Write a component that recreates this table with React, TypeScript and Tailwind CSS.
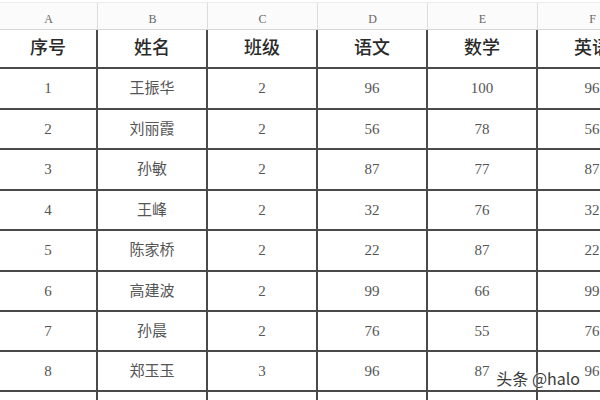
import React from 'react';

const letters = ['A', 'B', 'C', 'D', 'E', 'F'];
const headers = ['序号', '姓名', '班级', '语文', '数学', '英语'];

const rows = [
  ['1', '王振华', '2', '96', '100', '96'],
  ['2', '刘丽霞', '2', '56', '78', '56'],
  ['3', '孙敏', '2', '87', '77', '87'],
  ['4', '王峰', '2', '32', '76', '32'],
  ['5', '陈家桥', '2', '22', '87', '22'],
  ['6', '高建波', '2', '99', '66', '99'],
  ['7', '孙晨', '2', '76', '55', '76'],
  ['8', '郑玉玉', '3', '96', '87', '96'],
  ['', '', '', '', '', ''],
];

const heights = ['h-[41px]', 'h-[40px]', 'h-[41px]', 'h-[40px]', 'h-[41px]', 'h-[40px]', 'h-[40px]', 'h-[40px]', 'h-[40px]'];

const cellWidth = (i: number) => (i === 0 ? 'w-[98px]' : 'w-[110px]');

const cjk = "font-['Liberation_Serif','Noto_Sans_CJK_SC',serif]";

export default function App() {
  return (
    <div className="relative w-[600px] h-[400px] overflow-hidden bg-white antialiased">
      {/* column letters */}
      <div className="flex h-[28px] border-t border-[#ececec] mt-[2px] border-b border-b-[#d6d6d6] bg-[#fbfbfb]">
        {letters.map((l, i) => (
          <div
            key={l}
            className={`${cellWidth(i)} shrink-0 border-r border-[#dcdcdc] flex items-end justify-center pb-[1px] text-[12px] text-[#666] font-['Liberation_Serif',serif]`}
          >
            {l}
          </div>
        ))}
      </div>

      {/* header */}
      <div className="flex h-[39px] border-b-2 border-[#4a4a4a]">
        {headers.map((h, i) => (
          <div
            key={h}
            className={`${cellWidth(i)} shrink-0 border-r-2 border-[#4a4a4a] flex items-center justify-center text-[18px] font-medium text-[#2a2a2a] ${cjk}`}
          >
            {h}
          </div>
        ))}
      </div>

      {rows.map((r, ri) => (
        <div key={ri} className={`flex ${heights[ri]} border-b-2 border-[#4a4a4a]`}>
          {r.map((c, i) => (
            <div
              key={i}
              className={`${cellWidth(i)} shrink-0 border-r-2 border-[#4a4a4a] flex items-center justify-center text-[15px] text-[#555] ${cjk}`}
            >
              {c}
            </div>
          ))}
        </div>
      ))}

      <div className="absolute right-[20px] bottom-[10px] text-[16px] text-[#3a3a3a] font-['Noto_Sans_CJK_SC',sans-serif] [text-shadow:0_0_2px_#fff,0_0_2px_#fff]">
        头条 @halo
      </div>
    </div>
  );
}
